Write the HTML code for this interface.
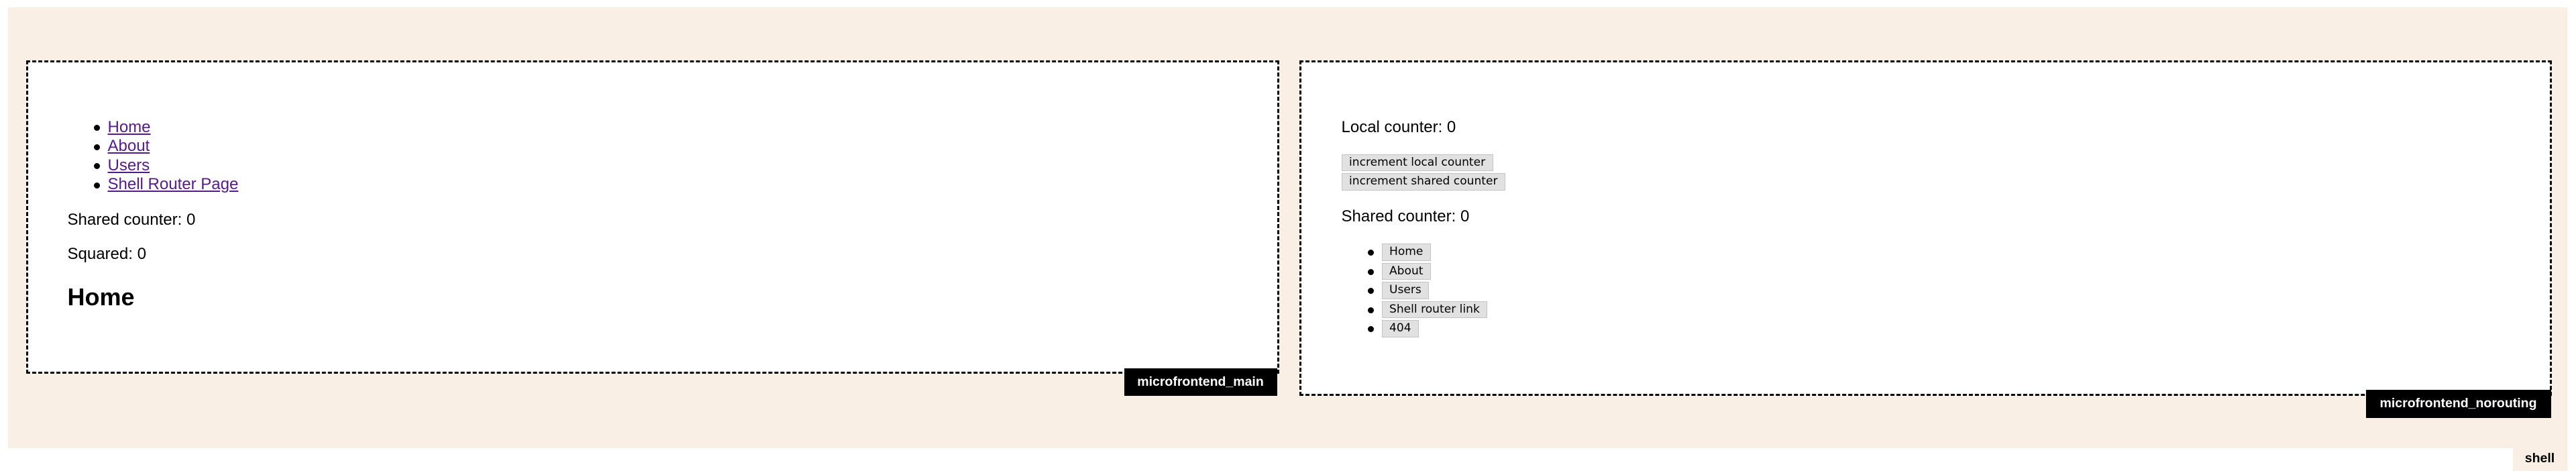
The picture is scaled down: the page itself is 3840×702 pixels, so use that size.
<!DOCTYPE html>
<html><head><style>
html,body{margin:0;padding:0;background:#fff;}
#z{zoom:1.5;position:relative;width:2560px;height:468px;font-family:"Liberation Sans",Arial,sans-serif;font-size:16px;color:#000;}
.a{position:absolute;white-space:nowrap;}
.shell{left:8px;top:7px;width:2543px;height:438px;background:#f9efe5;}
.box{border:2px dashed #000;background:#fff;box-sizing:border-box;}
.lbl{background:#000;color:#fff;font-weight:bold;font-size:13px;line-height:27px;text-align:center;}
a{color:#551a8b;text-decoration:underline;}
.t{line-height:18px;}
.btn{background:#e1e1e1;border:1px solid #c4c4c4;font-family:"DejaVu Sans",sans-serif;font-size:11.4px;line-height:15px;padding:0 7px;box-sizing:border-box;height:17px;}
.dot{width:6px;height:6px;border-radius:50%;background:#000;}
</style></head><body><div id="z">
<div class="a shell"></div>
<div class="a lbl" style="left:2497px;top:445px;width:54px;height:23px;line-height:20px;background:#f9efe5;color:#000;">shell</div>

<div class="a box" style="left:26px;top:60px;width:1245px;height:311px;"></div>
<div class="a lbl" style="left:1117px;top:366px;width:152px;height:27px;">microfrontend_main</div>
<div class="a dot" style="left:93px;top:124px"></div><a class="a t" style="left:107px;top:117px" href="#">Home</a>
<div class="a dot" style="left:93px;top:143px"></div><a class="a t" style="left:107px;top:136px" href="#">About</a>
<div class="a dot" style="left:93px;top:162px"></div><a class="a t" style="left:107px;top:155px" href="#">Users</a>
<div class="a dot" style="left:93px;top:181px"></div><a class="a t" style="left:107px;top:174px" href="#">Shell Router Page</a>
<div class="a t" style="left:67px;top:209px">Shared counter: 0</div>
<div class="a t" style="left:67px;top:243px">Squared: 0</div>
<div class="a" style="left:67px;top:281px;font-size:24px;font-weight:bold;line-height:28px">Home</div>

<div class="a box" style="left:1291px;top:60px;width:1245px;height:333px;"></div>
<div class="a lbl" style="left:2351px;top:387px;width:184px;height:28px;">microfrontend_norouting</div>
<div class="a t" style="left:1333px;top:117px">Local counter: 0</div>
<div class="a btn" style="left:1333px;top:153px">increment local counter</div>
<div class="a btn" style="left:1333px;top:172px">increment shared counter</div>
<div class="a t" style="left:1333px;top:206px">Shared counter: 0</div>
<div class="a dot" style="left:1359px;top:248px"></div><div class="a btn" style="left:1373px;top:242px">Home</div>
<div class="a dot" style="left:1359px;top:267px"></div><div class="a btn" style="left:1373px;top:261px">About</div>
<div class="a dot" style="left:1359px;top:286px"></div><div class="a btn" style="left:1373px;top:280px">Users</div>
<div class="a dot" style="left:1359px;top:305px"></div><div class="a btn" style="left:1373px;top:299px">Shell router link</div>
<div class="a dot" style="left:1359px;top:324px"></div><div class="a btn" style="left:1373px;top:318px">404</div>
</div></body></html>
